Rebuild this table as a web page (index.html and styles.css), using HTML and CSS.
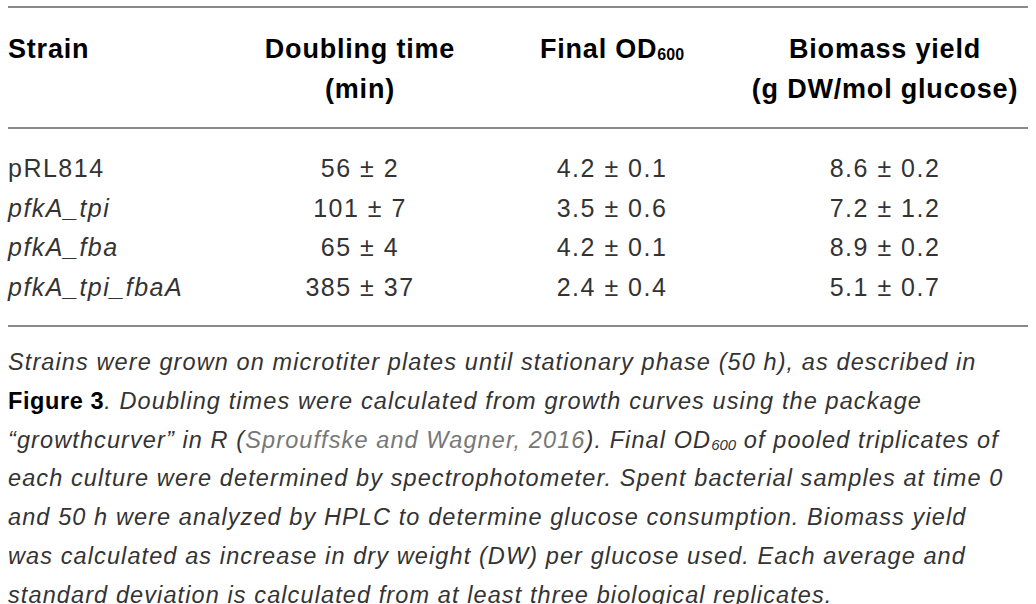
FILE: index.html
```html
<!DOCTYPE html>
<html lang="en">
<head>
    <meta charset="UTF-8">
    <meta name="viewport" content="width=device-width, initial-scale=1.0">
    <title>Growth parameters</title>
    <link rel="stylesheet" href="styles.css">
</head>
<body>
    <div class="table-wrap">
        <table class="data-table">
            <thead>
                <tr>
                    <th class="col-strain">Strain</th>
                    <th class="col-time">Doubling time<br>(min)</th>
                    <th class="col-od">Final OD<sub>600</sub></th>
                    <th class="col-yield">Biomass yield<br>(g DW/mol glucose)</th>
                </tr>
            </thead>
            <tbody>
                <tr>
                    <td>pRL814</td>
                    <td>56 ± 2</td>
                    <td>4.2 ± 0.1</td>
                    <td>8.6 ± 0.2</td>
                </tr>
                <tr>
                    <td><i>pfkA_tpi</i></td>
                    <td>101 ± 7</td>
                    <td>3.5 ± 0.6</td>
                    <td>7.2 ± 1.2</td>
                </tr>
                <tr>
                    <td><i>pfkA_fba</i></td>
                    <td>65 ± 4</td>
                    <td>4.2 ± 0.1</td>
                    <td>8.9 ± 0.2</td>
                </tr>
                <tr>
                    <td><i>pfkA_tpi_fbaA</i></td>
                    <td>385 ± 37</td>
                    <td>2.4 ± 0.4</td>
                    <td>5.1 ± 0.7</td>
                </tr>
            </tbody>
        </table>
        <p class="table-note">Strains were grown on microtiter plates until stationary phase (50 h), as described in<br><b>Figure 3</b>. Doubling times were calculated from growth curves using the package<br>“growthcurver” in R (<a href="#">Sprouffske and Wagner, 2016</a>). Final OD<sub>600</sub> of pooled triplicates of<br>each culture were determined by spectrophotometer. Spent bacterial samples at time 0<br>and 50 h were analyzed by HPLC to determine glucose consumption. Biomass yield<br>was calculated as increase in dry weight (DW) per glucose used. Each average and<br>standard deviation is calculated from at least three biological replicates.</p>
    </div>
</body>
</html>
```

FILE: styles.css
```css
body {
    margin: 0;
    background: #fff;
    font-family: "Liberation Sans", Arial, sans-serif;
    color: #333;
}
.table-wrap {
    width: 1020px;
    padding: 6px 8px 0;
}
.data-table {
    width: 100%;
    border-collapse: collapse;
    border-top: 2px solid #8a8a8a;
    border-bottom: 2px solid #8a8a8a;
    font-size: 25px;
    letter-spacing: 1.5px;
}
.data-table thead {
    border-bottom: 2px solid #8a8a8a;
}
.data-table th {
    color: #000;
    font-size: 27px;
    font-weight: bold;
    letter-spacing: 0.8px;
    line-height: 40px;
    padding: 21px 0 18px;
    text-align: center;
    vertical-align: top;
}
.data-table th.col-strain {
    text-align: left;
}
.col-strain { width: 230px; }
.col-time { width: 244px; }
.col-od { width: 260px; }
.col-yield { width: 286px; }
.data-table sub {
    font-size: 16px;
    letter-spacing: 0;
    vertical-align: -2px;
    line-height: 0;
}
.data-table td {
    line-height: 39.5px;
    padding: 0;
    text-align: center;
}
.data-table tbody tr:first-child td {
    padding-top: 20px;
}
.data-table tbody tr:last-child td {
    padding-bottom: 18px;
}
.data-table td:first-child {
    text-align: left;
}
.table-note {
    margin: 16px 0 0;
    font-size: 23.5px;
    letter-spacing: 1.1px;
    line-height: 38.8px;
    font-style: italic;
    white-space: nowrap;
}
.table-note b {
    font-style: normal;
    letter-spacing: 0.6px;
    color: #000;
}
.table-note a {
    color: #777;
    text-decoration: none;
}
.table-note sub {
    font-size: 15px;
    letter-spacing: 0;
    vertical-align: -2px;
    line-height: 0;
}
```
